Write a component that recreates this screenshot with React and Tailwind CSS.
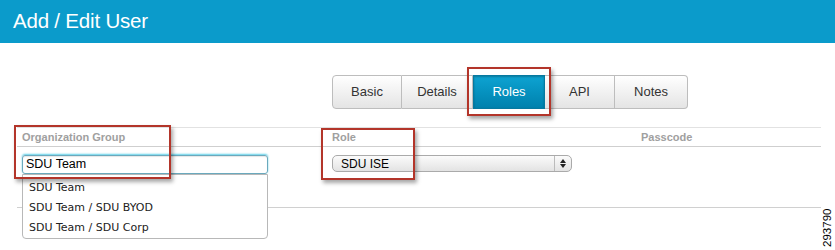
const tabs = [
  { label: 'Basic', w: 'w-[70px]' },
  { label: 'Details', w: 'w-[71px]' },
  { label: 'Roles', w: 'w-[72px]', active: true },
  { label: 'API', w: 'w-[70px]' },
  { label: 'Notes', w: 'w-[73px]' },
];

const orgOptions = ['SDU Team', 'SDU Team / SDU BYOD', 'SDU Team / SDU Corp'];

export default function App() {
  return (
    <div className="relative w-[835px] h-[250px] bg-white overflow-hidden font-['Liberation_Sans',Arial,sans-serif]">
      {/* Header */}
      <div className="h-[43px] bg-[#0b9bcb] flex items-center pl-[13px]">
        <h1 className="text-white text-[20.5px] leading-none tracking-[-0.2px]">Add / Edit User</h1>
      </div>

      {/* Tabs */}
      <div className="flex mt-[32px] ml-[332px]">
        {tabs.map((t, i) => (
          <div
            key={t.label}
            className={
              t.active
                ? `${t.w} h-[34px] flex items-center justify-center text-[13px] text-white bg-gradient-to-b from-[#0ea3d2] to-[#0081ad] border border-[#0679a0] shadow-[inset_0_1px_2px_rgba(0,0,0,0.25)]`
                : `${t.w} h-[34px] flex items-center justify-center text-[13px] text-[#333] bg-gradient-to-b from-[#ffffff] to-[#e4e4e4] border-y border-[#bdbdbd] ${i === 0 ? 'border-l rounded-l-[4px]' : ''} ${i === tabs.length - 1 ? 'border-r rounded-r-[4px]' : 'border-r'}`
            }
          >
            {t.label}
          </div>
        ))}
      </div>

      {/* Table */}
      <div className="mt-[18px] ml-[17px] w-[804px]">
        <div className="grid grid-cols-[315px_309px_180px] h-[20px] border-t border-[#e2e2e2] border-b border-b-[#cfcfcf] text-[11px] font-bold text-[#a0a0a0] items-center">
          <div className="pl-[5px]">Organization Group</div>
          <div>Role</div>
          <div>Passcode</div>
        </div>
        <div className="grid grid-cols-[315px_309px_180px] h-[61px] border-b border-[#d0d0d0] pt-[8px]">
          <div className="relative pl-[5px]">
            <div className="w-[246px] h-[19px] rounded-[3px] border border-[#6aa9bd] shadow-[0_-1px_2px_#5fd0e8,inset_0_1px_1px_rgba(0,0,0,0.1)] flex items-center pl-[3px] text-[12.5px] text-black">
              SDU Team
            </div>
            {/* Dropdown menu */}
            <div className="absolute left-[5px] top-[19px] w-[246px] h-[65px] bg-white border border-[#b8b8b8] rounded-b-[4px] pt-[3px] z-10 font-['DejaVu_Sans',Verdana,sans-serif] text-[11px] text-[#222]">
              {orgOptions.map((o) => (
                <div key={o} className="h-[20px] flex items-center pl-[6px]">{o}</div>
              ))}
            </div>
          </div>
          <div>
            <div className="w-[240px] h-[17px] rounded-[5px] border border-[#aaa] bg-gradient-to-b from-[#fbfbfb] to-[#e3e3e3] flex items-center text-[12px] text-black">
              <span className="flex-1 pl-[8px]">SDU ISE</span>
              <span className="w-[17px] h-full border-l border-[#bbb] flex flex-col items-center justify-center gap-[1px]">
                <svg width="6" height="4" viewBox="0 0 6 4"><path d="M3 0L6 4H0z" fill="#222" /></svg>
                <svg width="6" height="4" viewBox="0 0 6 4"><path d="M0 0H6L3 4z" fill="#222" /></svg>
              </span>
            </div>
          </div>
          <div />
        </div>
      </div>

      {/* Annotation boxes */}
      <div className="absolute left-[467px] top-[67px] w-[84px] h-[49px] border-2 border-[#b3352a] shadow-[2px_3px_4px_rgba(0,0,0,0.35)]" />
      <div className="absolute left-[14px] top-[125px] w-[157px] h-[54px] border-2 border-[#b3352a] shadow-[2px_3px_4px_rgba(0,0,0,0.35)] z-20" />
      <div className="absolute left-[321px] top-[128px] w-[94px] h-[52px] border-2 border-[#b3352a] shadow-[2px_3px_4px_rgba(0,0,0,0.35)]" />

      {/* Figure number */}
      <div className="absolute right-[1px] bottom-[2px] w-[11px] h-[40px] flex items-center justify-center">
        <span className="-rotate-90 whitespace-nowrap text-[11.5px] text-black leading-none">293790</span>
      </div>
    </div>
  );
}
